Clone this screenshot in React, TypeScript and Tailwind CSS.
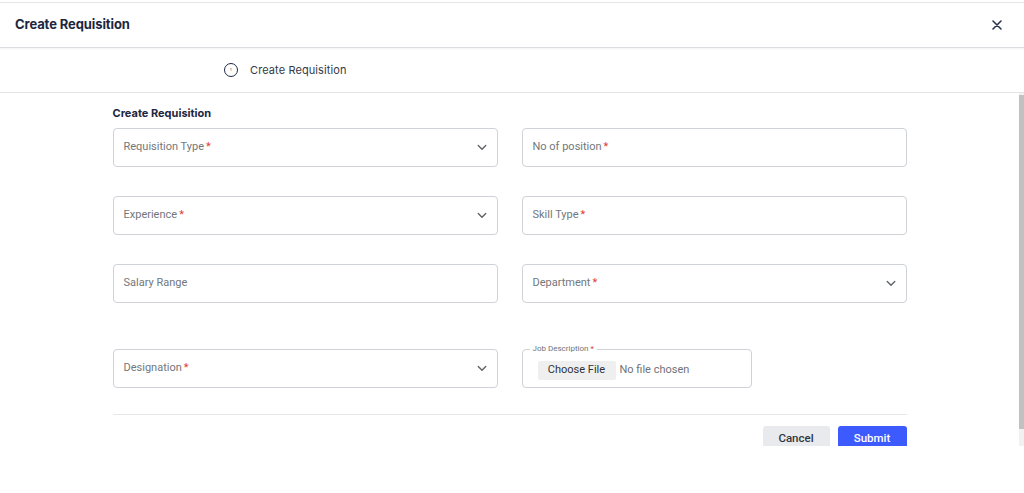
import React from "react";

const Chevron = () => (
  <svg width="10" height="7" viewBox="0 0 10 7" fill="none" className="mr-[1px] shrink-0">
    <path d="M1.25 1.5L5 5.25L8.75 1.5" stroke="#5f6368" strokeWidth="1.4" strokeLinecap="round" strokeLinejoin="round" />
  </svg>
);

const Req = () => <span className="ml-[2px] text-[#e53935]">*</span>;

function Field({ label, required, select }: { label: string; required?: boolean; select?: boolean }) {
  return (
    <div className="flex h-[39px] items-center justify-between rounded-[4px] border border-[#cfd2d6] bg-white pl-[10px] pr-[9px]">
      <span className="text-[11px] text-[#73777c]" style={{ fontFamily: "Roboto, 'Liberation Sans', sans-serif" }}>
        {label}
        {required && <Req />}
      </span>
      {select && <Chevron />}
    </div>
  );
}

export default function App() {
  const poppins = { fontFamily: "Inter, 'Noto Sans', sans-serif" };
  return (
    <div className="h-[493px] w-[1024px] overflow-hidden bg-white pt-[2px]">
      <div className="flex h-[444px] flex-col border-t border-[#e3e4e6]">
        <div className="flex h-[45px] shrink-0 items-center justify-between border-b border-[#dcdde0] pl-[15px] pr-[22px] shadow-[0_1px_2px_rgba(0,0,0,0.05)]">
          <span className="text-[13px] font-bold tracking-[-0.1px] text-[#1c2640]" style={poppins}>
            Create Requisition
          </span>
          <svg width="10" height="10" viewBox="0 0 10 10" fill="none">
            <path d="M1 1L9 9M9 1L1 9" stroke="#2a3550" strokeWidth="1.6" strokeLinecap="round" />
          </svg>
        </div>
        <div className="flex h-[45px] shrink-0 items-center border-b border-[#e3e4e6] pl-[224px]">
          <div className="flex h-[14px] w-[14px] items-center justify-center rounded-full border-[1.6px] border-[#1f2a44]">
            <span className="text-[4px] leading-none text-[#1f2a44]">1</span>
          </div>
          <span className="ml-[12px] text-[11px] tracking-[0.1px] text-[#343a46]" style={poppins}>
            Create Requisition
          </span>
        </div>
        <div className="flex min-h-0 flex-1">
          <div className="min-w-0 flex-1 overflow-hidden">
            <div className="mx-auto w-[794px] pt-[12px]">
              <div className="text-[11px] font-bold text-[#1c2640]" style={poppins}>
                Create Requisition
              </div>
              <div className="mt-[6px] grid grid-cols-2 gap-x-[24px]">
                <Field label="Requisition Type" required select />
                <Field label="No of position" required />
              </div>
              <div className="mt-[29px] grid grid-cols-2 gap-x-[24px]">
                <Field label="Experience" required select />
                <Field label="Skill Type" required />
              </div>
              <div className="mt-[29px] grid grid-cols-2 gap-x-[24px]">
                <Field label="Salary Range" />
                <Field label="Department" required select />
              </div>
              <div className="mt-[46px] grid grid-cols-2 gap-x-[24px]">
                <Field label="Designation" required select />
                <div
                  className="relative flex h-[39px] w-[230px] items-center rounded-[4px] border border-[#cfd2d6] pl-[15px] pt-[4px]"
                  style={{ fontFamily: "Roboto, 'Liberation Sans', sans-serif" }}
                >
                  <span className="absolute left-[7px] top-[-6px] bg-white px-[3px] text-[8px] leading-[10px] text-[#6f7378]">
                    Job Description<Req />
                  </span>
                  <span className="flex h-[19px] w-[78px] items-center justify-center rounded-[2px] bg-[#efefef] text-[11px] text-[#2f3337]">
                    Choose File
                  </span>
                  <span className="ml-[4px] text-[11px] text-[#6f7378]">No file chosen</span>
                </div>
              </div>
              <div className="mt-[26px] border-t border-[#e6e7e9]" />
              <div className="mt-[11px] flex justify-end gap-[8px]" style={{ fontFamily: "Roboto, 'Liberation Sans', sans-serif" }}>
                <button className="h-[24px] w-[67px] rounded-t-[3px] bg-[#e9eaee] pt-[2px] text-[11.5px] font-medium text-[#2f3640]">
                  Cancel
                </button>
                <button className="h-[24px] w-[69px] rounded-t-[3px] bg-[#3d5afe] pt-[2px] text-[11.5px] font-medium text-white">
                  Submit
                </button>
              </div>
            </div>
          </div>
          <div className="flex w-[5px] shrink-0 flex-col bg-[#f1f1f1] pt-[2px]">
            <div className="h-[334px] bg-[#c1c1c1]" />
          </div>
        </div>
      </div>
    </div>
  );
}
